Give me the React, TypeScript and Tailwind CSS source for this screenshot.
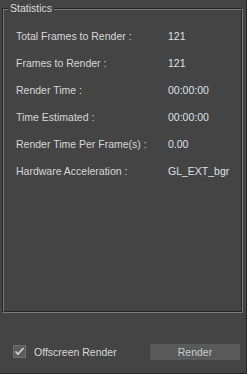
const rows = [
  { label: 'Total Frames to Render :', value: '121' },
  { label: 'Frames to Render :', value: '121' },
  { label: 'Render Time :', value: '00:00:00' },
  { label: 'Time Estimated :', value: '00:00:00' },
  { label: 'Render Time Per Frame(s) :', value: '0.00' },
  { label: 'Hardware Acceleration :', value: 'GL_EXT_bgr' },
];

export default function App() {
  return (
    <div
      className="relative w-[247px] h-[374px] bg-[#444444] border-r border-b border-[#282828] text-[10.5px] leading-[12px] text-[#d8d8d8]"
      style={{ fontFamily: '"Liberation Sans", Arial, sans-serif' }}
    >
      {/* Statistics group box, etched frame */}
      <div className="relative ml-[2px] pt-[8px]">
        <div className="w-[241px] h-[305px] border border-t-[#262626] border-l-[#262626] border-r-[#7a7a7a] border-b-[#7a7a7a]">
          <div className="h-full border border-t-[#7a7a7a] border-l-[#7a7a7a] border-r-[#262626] border-b-[#262626] pl-[12px] pt-[12.5px]">
            {rows.map((r) => (
              <div key={r.label} className="flex items-center h-[27px]">
                <span className="w-[152px] whitespace-nowrap">{r.label}</span>
                <span className="text-[#dce2e8] whitespace-nowrap">{r.value}</span>
              </div>
            ))}
          </div>
        </div>
        <span className="absolute left-[6px] top-[2px] px-[2px] bg-[#444444] text-[#dcdcdc]">Statistics</span>
      </div>

      {/* Bottom controls */}
      <div className="flex items-center h-[17px] mt-[30px] pl-[13px]">
        <span className="flex items-center justify-center w-[13px] h-[13px] bg-[#5c5c5c] border border-[#6e6e6e]">
          <svg width="11" height="11" viewBox="0 0 11 11">
            <polyline points="1.5,5.5 4,8 9.5,2" fill="none" stroke="#d6d6d6" strokeWidth="1.6" />
          </svg>
        </span>
        <span className="ml-[8px] w-[116px] whitespace-nowrap">Offscreen Render</span>
        <button className="w-[90px] h-[16px] bg-[#595959] text-[#c8cdd2] leading-[16px]">Render</button>
      </div>
    </div>
  );
}
